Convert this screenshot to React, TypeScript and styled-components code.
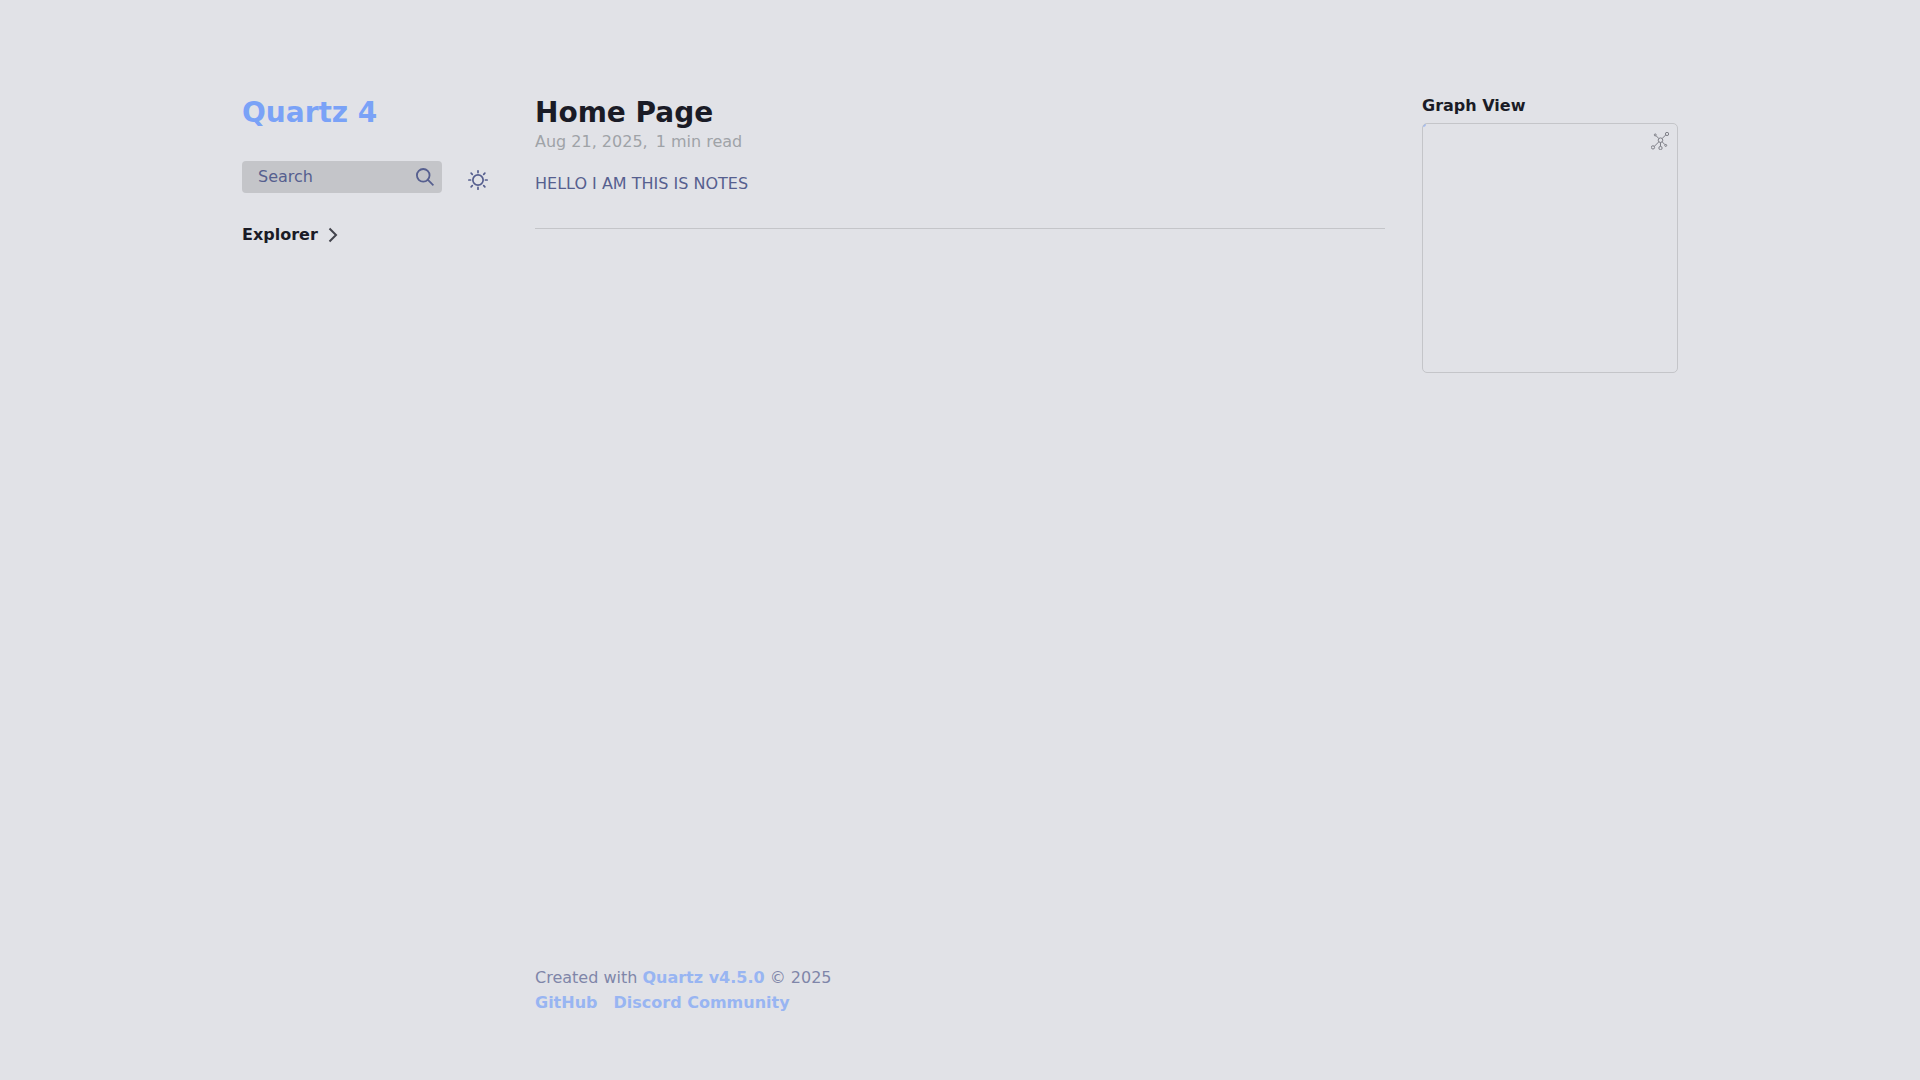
import React from "react";
import styled, { createGlobalStyle, ThemeProvider } from "styled-components";

const theme = {
  light: "#e1e2e7",
  lightgray: "#c4c5c9",
  gray: "#9fa3a7",
  darkgray: "#565f8f",
  dark: "#1a1b26",
  secondary: "#7aa2f7",
};

const GlobalStyle = createGlobalStyle`
  *, *::before, *::after { box-sizing: border-box; }
  body {
    margin: 0;
    background: ${theme.light};
    color: ${theme.darkgray};
    font: 16px/25px "DejaVu Sans", sans-serif;
  }
  h1, h2, p, ul { margin: 0; padding: 0; }
  button { border: 0; padding: 0; background: none; font: inherit; color: inherit; cursor: pointer; }
  svg { display: block; }
`;

const Page = styled.div`
  display: grid;
  grid-template-columns: 320px minmax(0, 1fr) 320px;
  column-gap: 5px;
  max-width: 1500px;
  min-height: 100vh;
  margin: 0 auto;
`;

const Sidebar = styled.aside`
  display: flex;
  flex-direction: column;
  gap: 32px;
  padding: 96px 32px 32px;
`;

const Center = styled.div`
  display: flex;
  flex-direction: column;
  padding: 96px 0 65px;
`;

const Title = styled.h1`
  font-size: 28px;
  line-height: 33px;
  font-weight: 700;
  color: ${(p) => p.theme.dark};
`;

const SiteTitle = styled(Title).attrs({ as: "h2" })`
  color: ${(p) => p.theme.secondary};
`;

const Link = styled.a`
  color: inherit;
  font-weight: 700;
  text-decoration: none;
`;

const Toolbar = styled.div`
  display: flex;
  align-items: flex-end;
  gap: 24px;
`;

const SearchButton = styled.button`
  display: flex;
  align-items: center;
  justify-content: space-between;
  width: 200px;
  height: 32px;
  padding: 0 8px 0 16px !important;
  border-radius: 4px;
  background: ${(p) => p.theme.lightgray} !important;
`;

const SearchLabel = styled.span`
  line-height: 20px;
`;

const IconButton = styled.button`
  display: flex;
  align-items: center;
  justify-content: center;
  width: 24px;
  height: 26px;
`;

const Heading = styled.h2`
  font-size: 16px;
  line-height: 19px;
  font-weight: 700;
  color: ${(p) => p.theme.dark};
`;

const ExplorerToggle = styled.button`
  display: flex;
  align-items: center;
  align-self: flex-start;
  gap: 8px;
  color: ${(p) => p.theme.dark};
`;

const Meta = styled.p`
  display: flex;
  gap: 8px;
  color: ${(p) => p.theme.gray};
`;

const Article = styled.article`
  margin: 17px 0 32px;
`;

const Rule = styled.hr`
  width: 100%;
  height: 1px;
  margin: 0;
  border: 0;
  background: ${(p) => p.theme.lightgray};
`;

const Footer = styled.footer`
  margin-top: auto;
  opacity: 0.7;

  a { color: ${(p) => p.theme.secondary}; }
`;

const FooterLinks = styled.ul`
  display: flex;
  gap: 16px;
  list-style: none;
`;

const Graph = styled.section`
  display: flex;
  flex-direction: column;
  gap: 8px;
`;

const GraphFrame = styled.div`
  position: relative;
  height: 250px;
  border: 1px solid ${(p) => p.theme.lightgray};
  border-radius: 5px;
  overflow: hidden;
`;

const ExpandButton = styled.button`
  position: absolute;
  top: 5px;
  right: 5px;
  padding: 3px !important;
  color: ${(p) => p.theme.dark};
  opacity: 0.5;
`;

const SearchIcon = () => (
  <svg width="18" height="18" viewBox="0 0 19.9 19.7" fill="none" stroke="currentColor" strokeWidth="2" aria-hidden="true">
    <path strokeLinecap="square" d="M18.5 18.3l-5.4-5.4" />
    <circle cx="8" cy="8" r="7" />
  </svg>
);

const SunIcon = () => (
  <svg width="20" height="20" viewBox="0 0 35 35" fill="none" stroke="currentColor" strokeWidth="3" strokeLinecap="round" aria-hidden="true">
    <circle cx="17.5" cy="17.5" r="9" />
    <path d="M1.5 17.5h3M30.5 17.5h3M17.5 1.5v3M17.5 30.5v3M5.5 5.5l2 2M27.5 27.5l2 2M5.5 29.5l2-2M27.5 7.5l2-2" />
  </svg>
);

const ChevronIcon = () => (
  <svg width="14" height="16" viewBox="0 0 14 16" fill="none" stroke="currentColor" strokeWidth="2" strokeOpacity="0.8" aria-hidden="true">
    <path d="M3.5 1.5l6.5 6.5l-6.5 6.5" />
  </svg>
);

const GraphIcon = () => (
  <svg width="18" height="18" viewBox="0 0 55 55" fill="none" stroke="currentColor" strokeWidth="3" aria-hidden="true">
    <circle cx="29" cy="25" r="7" />
    <circle cx="49" cy="6" r="5" />
    <circle cx="6" cy="47" r="5" />
    <circle cx="29" cy="49" r="5" />
    <circle cx="13" cy="9" r="3" />
    <circle cx="45" cy="41" r="3" />
    <path d="M34 20l11-11M24 30L10 44M29 32v12M24 20l-9-9M34 30l9 9" />
  </svg>
);

const GraphNode = () => (
  <svg width="8" height="8" aria-hidden="true">
    <circle cx="0" cy="0" r="3" fill={theme.secondary} fillOpacity="0.6" />
  </svg>
);

export default function App() {
  return (
    <ThemeProvider theme={theme}>
      <GlobalStyle />
      <Page>
        <Sidebar>
          <SiteTitle><Link href="#">Quartz 4</Link></SiteTitle>
          <Toolbar>
            <SearchButton type="button">
              <SearchLabel>Search</SearchLabel>
              <SearchIcon />
            </SearchButton>
            <IconButton type="button" aria-label="Dark mode">
              <SunIcon />
            </IconButton>
          </Toolbar>
          <ExplorerToggle type="button" aria-expanded={false}>
            <Heading>Explorer</Heading>
            <ChevronIcon />
          </ExplorerToggle>
        </Sidebar>
        <Center>
          <Title>Home Page</Title>
          <Meta>
            <time dateTime="2025-08-21">Aug 21, 2025,</time>
            <span>1 min read</span>
          </Meta>
          <Article>
            <p>HELLO I AM THIS IS NOTES</p>
          </Article>
          <Rule />
          <Footer>
            <p>Created with <Link href="#">Quartz v4.5.0</Link> © 2025</p>
            <FooterLinks>
              <li><Link href="#">GitHub</Link></li>
              <li><Link href="#">Discord Community</Link></li>
            </FooterLinks>
          </Footer>
        </Center>
        <Sidebar>
          <Graph>
            <Heading>Graph View</Heading>
            <GraphFrame>
              <GraphNode />
              <ExpandButton type="button" aria-label="Global Graph">
                <GraphIcon />
              </ExpandButton>
            </GraphFrame>
          </Graph>
        </Sidebar>
      </Page>
    </ThemeProvider>
  );
}
